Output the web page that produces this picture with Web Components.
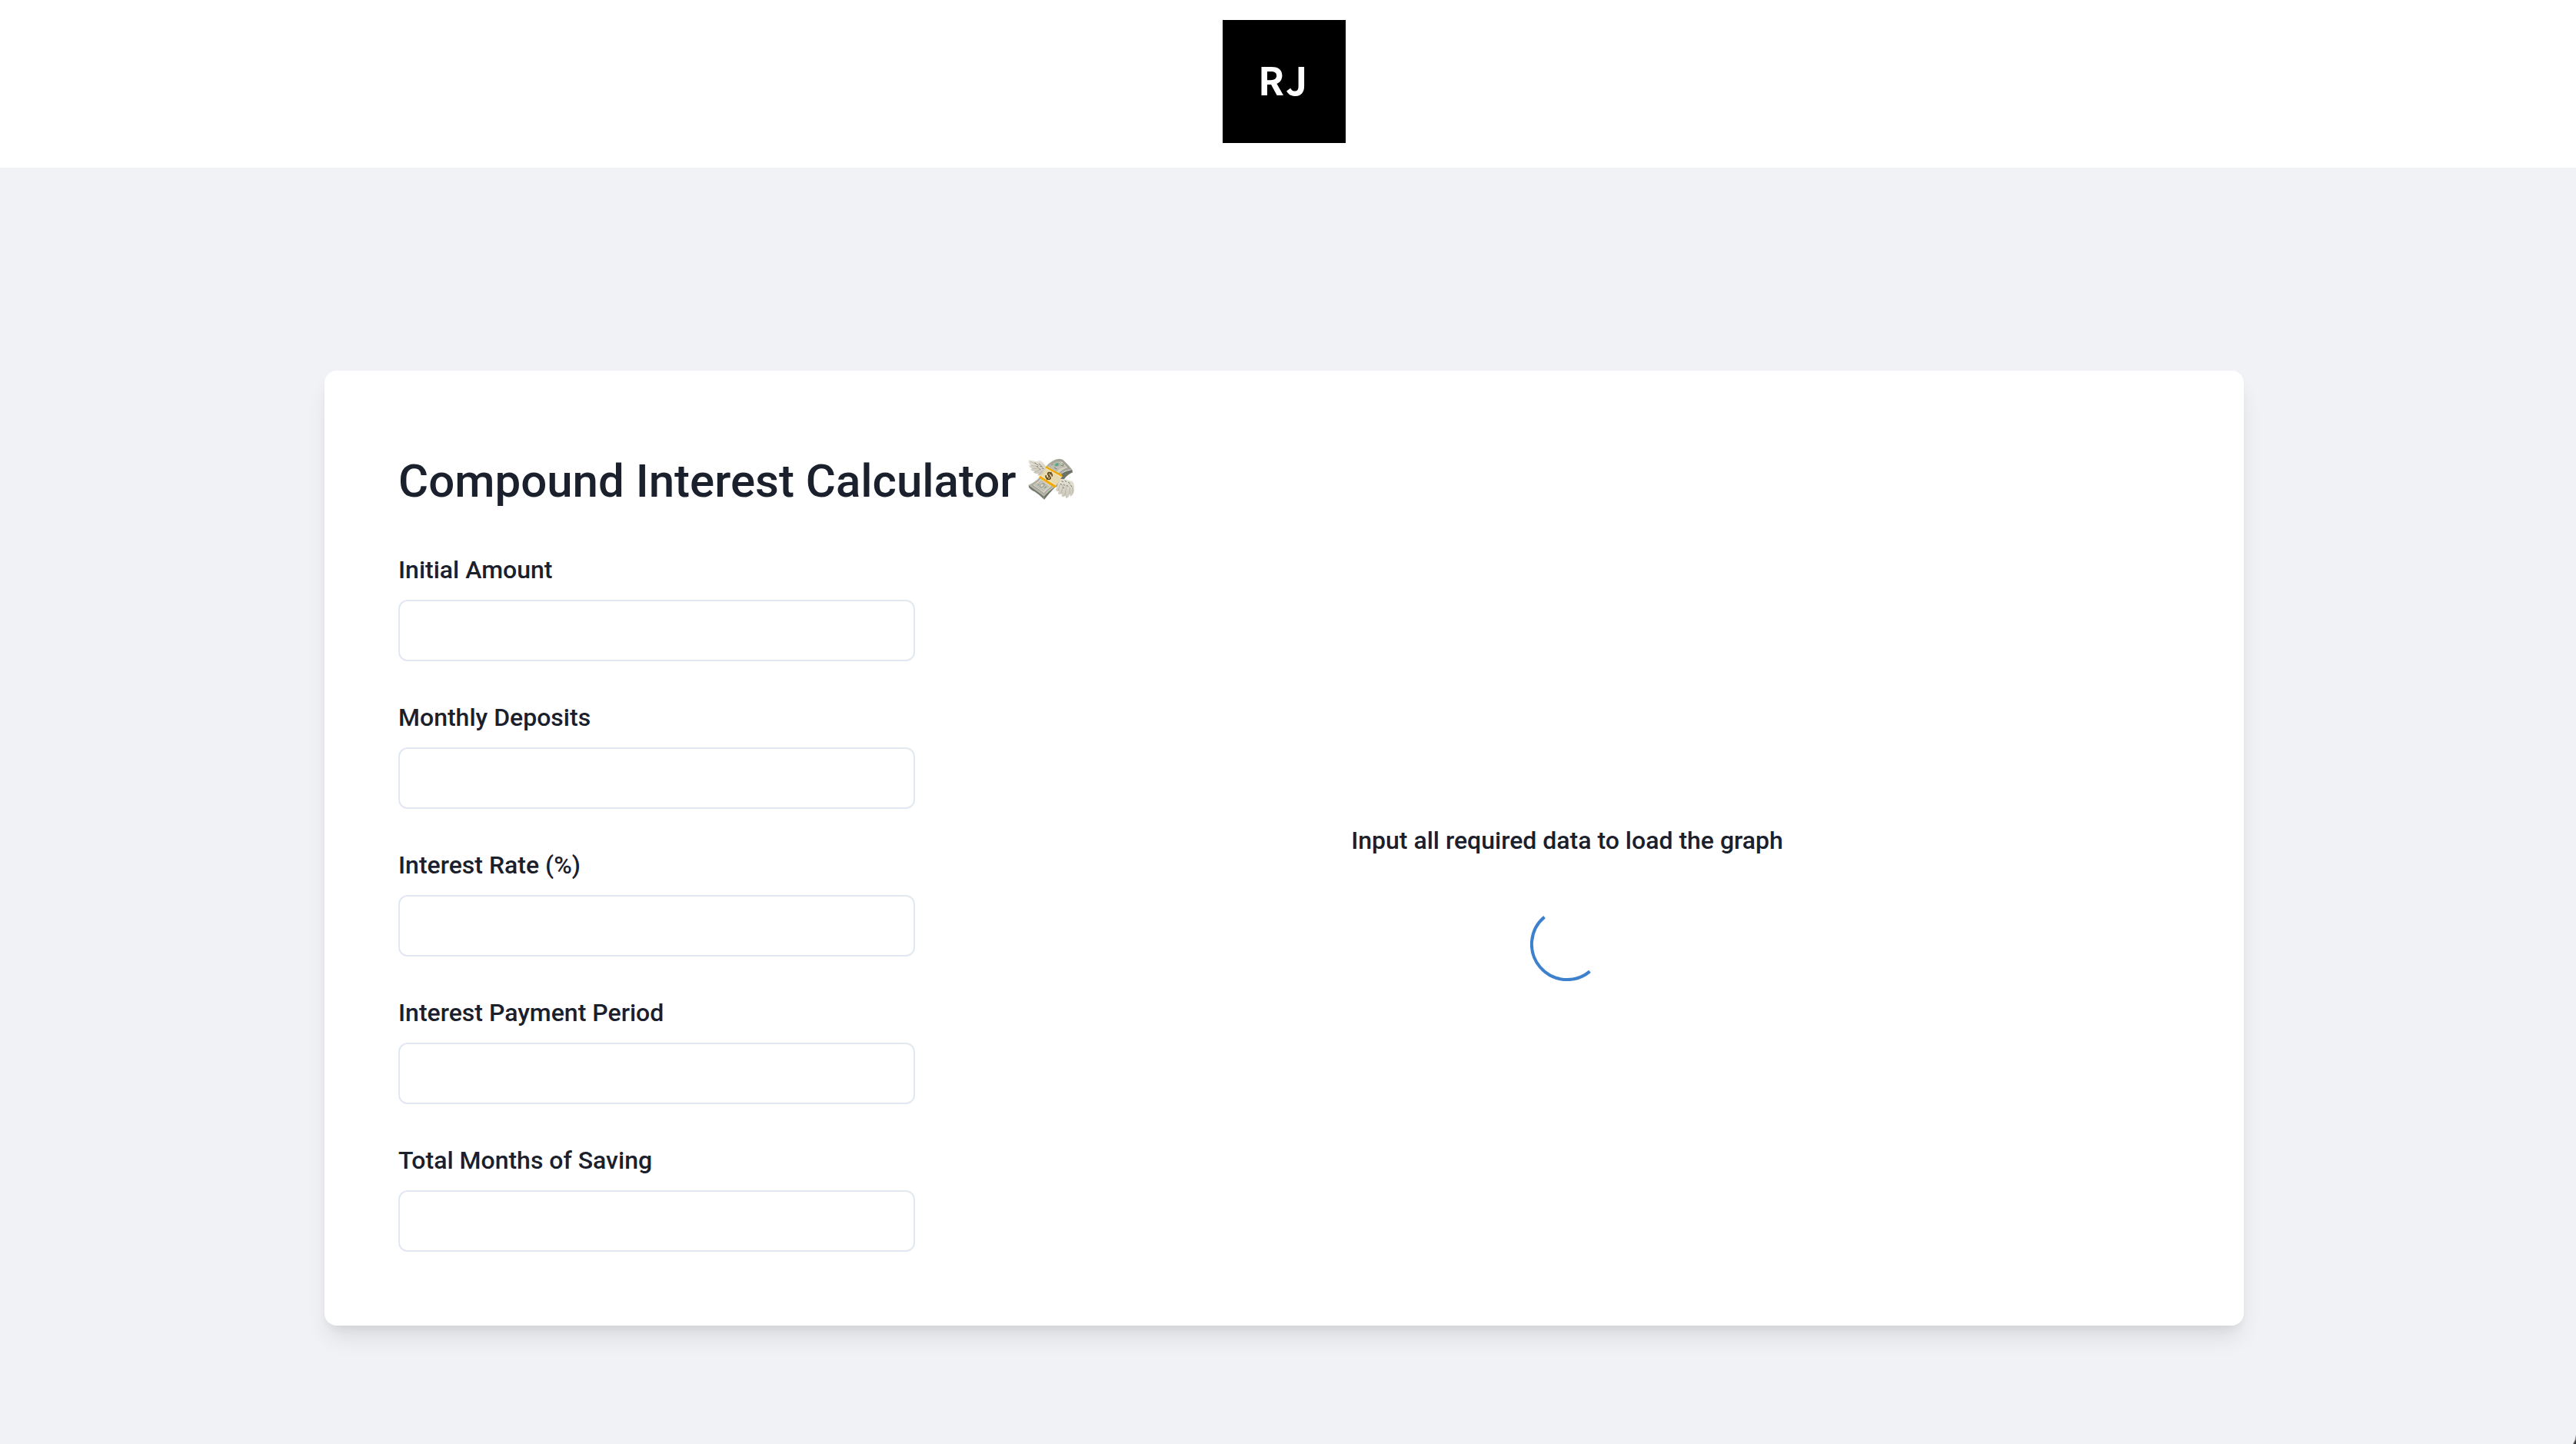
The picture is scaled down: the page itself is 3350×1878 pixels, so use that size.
<!DOCTYPE html>
<html lang="en">
<head>
<meta charset="utf-8">
<meta name="viewport" content="width=device-width, initial-scale=1">
<title>Compound Interest Calculator</title>
<style>
  body { margin: 0; background: #f0f2f6; color: #1a202c; font: 500 32px/48px Roboto, "Liberation Sans", sans-serif; }
</style>
</head>
<body>
<calc-page>
  <site-header slot="header"></site-header>
  <calc-card>
    <span slot="title">Compound Interest Calculator</span>
    <money-icon slot="icon"></money-icon>
    <number-field slot="fields" name="initial">Initial Amount</number-field>
    <number-field slot="fields" name="monthly">Monthly Deposits</number-field>
    <number-field slot="fields" name="rate">Interest Rate (%)</number-field>
    <number-field slot="fields" name="period">Interest Payment Period</number-field>
    <number-field slot="fields" name="months">Total Months of Saving</number-field>
    <graph-placeholder slot="graph">Input all required data to load the graph</graph-placeholder>
  </calc-card>
</calc-page>

<script>
const define = (name, html, setup) => customElements.define(name, class extends HTMLElement {
  constructor() {
    super();
    this.attachShadow({ mode: "open" }).innerHTML = html;
  }
  connectedCallback() { if (setup) setup(this); }
});

define("calc-page", `
  <style>
    :host { display: flex; flex-direction: column; position: relative; min-height: 100vh; }
    .top { background: #fff; padding-right: 10px; }
    main { padding: 264px 42px 80px 32px; }
    .corner { position: absolute; right: 0; bottom: 0; width: 4px; height: 12px; }
  </style>
  <div class="top"><slot name="header"></slot></div>
  <main><slot></slot></main>
  <svg class="corner" viewBox="0 0 4 12" aria-hidden="true"><path d="M4 0Q3 7 0 12H4Z" fill="#888"/><path d="M4 6Q3 9 1 12H4Z" fill="#333"/></svg>`);

define("site-header", `
  <style>
    :host { display: block; }
    header { display: flex; justify-content: center; padding: 26px 0 32px; }
    a { display: flex; align-items: center; gap: 2px; box-sizing: border-box; width: 160px; height: 160px; padding: 0 0 8px 46px;
        background: #000; color: #fff; font: 700 50px/64px "Noto Sans CJK SC", sans-serif; text-decoration: none; }
  </style>
  <header><a href="#"><span>R</span> <span>J</span></a></header>`);

define("calc-card", `
  <style>
    :host { display: block; box-sizing: border-box; max-width: 2496px; margin: 0 auto; padding: 96px;
            background: #fff; border-radius: 16px;
            box-shadow: 0 20px 30px -6px rgba(0,0,0,.1), 0 8px 12px -4px rgba(0,0,0,.05); }
    h1 { display: flex; align-items: center; gap: 14px; margin: 0 0 42px; font-size: 60px; line-height: 96px; font-weight: 500; }
    .row { display: flex; align-items: center; gap: 64px; }
    form { display: flex; flex-direction: column; gap: 48px; flex: 0 1 672px; }
    section { flex: 1; }
  </style>
  <h1><slot name="title"></slot><slot name="icon"></slot></h1>
  <div class="row">
    <form><slot name="fields"></slot></form>
    <section><slot name="graph"></slot></section>
  </div>`);

define("number-field", `
  <style>
    :host { display: flex; flex-direction: column; gap: 14px; }
    label { line-height: 50px; }
    input { box-sizing: border-box; width: 100%; height: 80px; margin: 0; padding: 0 32px; border: 2px solid #e2e8f0;
            border-radius: 12px; background: #fff; color: inherit; font: inherit; outline: none; }
    input:focus { border-color: #3182ce; }
  </style>
  <label for="field"><slot></slot></label>
  <input id="field" type="text" inputmode="decimal">`,
  host => { host.shadowRoot.querySelector("input").name = host.getAttribute("name"); });

define("graph-placeholder", `
  <style>
    :host { display: flex; flex-direction: column; align-items: center; gap: 62px; text-align: center; }
    div { line-height: 50px; }
    svg { display: block; width: 96px; height: 96px; }
  </style>
  <div><slot></slot></div>
  <svg viewBox="0 0 96 96" role="status" aria-label="Loading" fill="none" stroke="#3d80ce" stroke-width="4">
    <path d="M18.5 12.6A46 46 0 0 0 77.5 83.4"/>
  </svg>`);

define("money-icon", `
  <style>
    :host { display: block; padding-bottom: 6px; }
    svg { display: block; width: 66px; height: 60px; }
  </style>
  <svg viewBox="105 68 198 180" role="img" aria-label="Money with wings">
    <defs>
      <linearGradient id="wing" x1="0" y1="0" x2="0" y2="1"><stop offset="0" stop-color="#e7e3d7"/><stop offset="1" stop-color="#c9c5b8"/></linearGradient>
      <linearGradient id="bill" x1="0" y1="1" x2="1" y2="0"><stop offset="0" stop-color="#aaa99f"/><stop offset=".5" stop-color="#c5c3b5"/><stop offset="1" stop-color="#96968f"/></linearGradient>
    </defs>
    <path d="M113 181L173 224L174 238Q158 222 136 207Q120 200 114 190Z" fill="#767d70"/>
    <path d="M173 224Q194 202 219 184Q224 160 241 138Q259 125 283 122L285 132Q263 142 252 158Q238 183 216 190Q195 211 174 238Z" fill="#6d7467"/>
    <path d="M113 181Q150 166 163 138Q178 103 205 88Q228 74 247 83Q260 94 283 121Q254 122 239 139Q229 153 219 178Q213 192 197 201Q180 214 173 226Q143 200 113 181Z" fill="url(#bill)"/>
    <path d="M126 181Q157 165 169 139Q184 104 210 93Q229 83 244 89Q253 98 268 115Q242 121 230 139Q218 177 199 191Q183 202 173 215Q150 196 126 181Z" fill="#d3d1c3" stroke="#858579" stroke-width="2"/>
    <path d="M192 109Q211 88 237 91L257 111Q234 111 222 128Z" fill="#bfc0b1" stroke="#96978a"/>
    <path d="M137 181Q153 174 162 165L191 187Q177 194 170 205Z" fill="#c4c5b7" stroke="#96978a"/>
    <ellipse cx="223" cy="102" rx="13" ry="8" transform="rotate(-12 223 102)" fill="#a7b3a3"/>
    <path d="M217 101L224 96L231 98L226 106L218 107Z" fill="#4fa684"/>
    <path d="M202 105L208 99M239 105L249 107M213 114L224 119M245 98L252 103M148 183L154 178M175 193L183 187" stroke="#777c6e" stroke-width="3"/>
    <ellipse cx="166" cy="183" rx="12" ry="8" transform="rotate(-30 166 183)" fill="#aaa99f"/>
    <path d="M158 183l6-6 8 1-2 8-8 4z" fill="#dedbcc" stroke="#74776b" stroke-width="1"/>
    <path d="M181 108L245 147L216 192L156 151Q168 136 181 108Z" fill="#e7d9ae"/>
    <path d="M181 108L245 142L241 149L177 114Z" fill="#efa900"/>
    <path d="M156 145L220 184L216 193L154 153Z" fill="#f4aa00"/>
    <path d="M182 117L238 149M162 144L216 178" stroke="#fff1c4" stroke-width="2"/>
    <g fill="none" stroke="#604218" stroke-linecap="round" transform="translate(193 146) rotate(30)">
      <path d="M10 -6Q7 -13 0 -13Q-9 -13 -9 -7Q-9 -2 0 0Q10 2 9 8Q8 13 0 13Q-8 13 -11 6" stroke-width="5"/>
      <path d="M0 -17V17" stroke-width="3"/>
    </g>
    <path d="M181 110L172 130Q164 147 147 144L153 137Q136 139 131 132L139 128Q122 128 121 119L130 117Q114 114 115 104L124 106Q111 98 113 84Q131 85 145 90Q158 82 166 91Q175 97 181 110Z" fill="url(#wing)"/>
    <path d="M119 90L144 100M122 105L150 109M127 117L153 116M136 131L158 122M153 140L168 126" stroke="#a9a69a" stroke-width="2"/>
    <path d="M137 94L143 99M145 100L151 105M153 98L160 104M157 108L166 108M144 108L151 112M164 113L172 119M154 118L160 121" stroke="#77776b" stroke-width="3"/>
    <path d="M237 158Q258 156 274 165Q288 164 290 180L291 202Q289 219 276 226L273 215Q271 231 259 233L256 222Q249 233 242 224L242 214Q234 221 227 215L231 204Q222 210 219 199Q224 176 237 158Z" fill="url(#wing)"/>
    <path d="M236 177L228 205M248 181L240 215M261 185L254 223M274 189L273 217M284 188L285 212" stroke="#aaa79b" stroke-width="2"/>
    <path d="M241 166L249 169M254 164L261 169M267 170L275 176M237 177L244 181M249 178L256 184M261 182L268 187M276 181L282 188M246 190L252 194" stroke="#77776b" stroke-width="3"/>
  </svg>`);
</script>
</body>
</html>
